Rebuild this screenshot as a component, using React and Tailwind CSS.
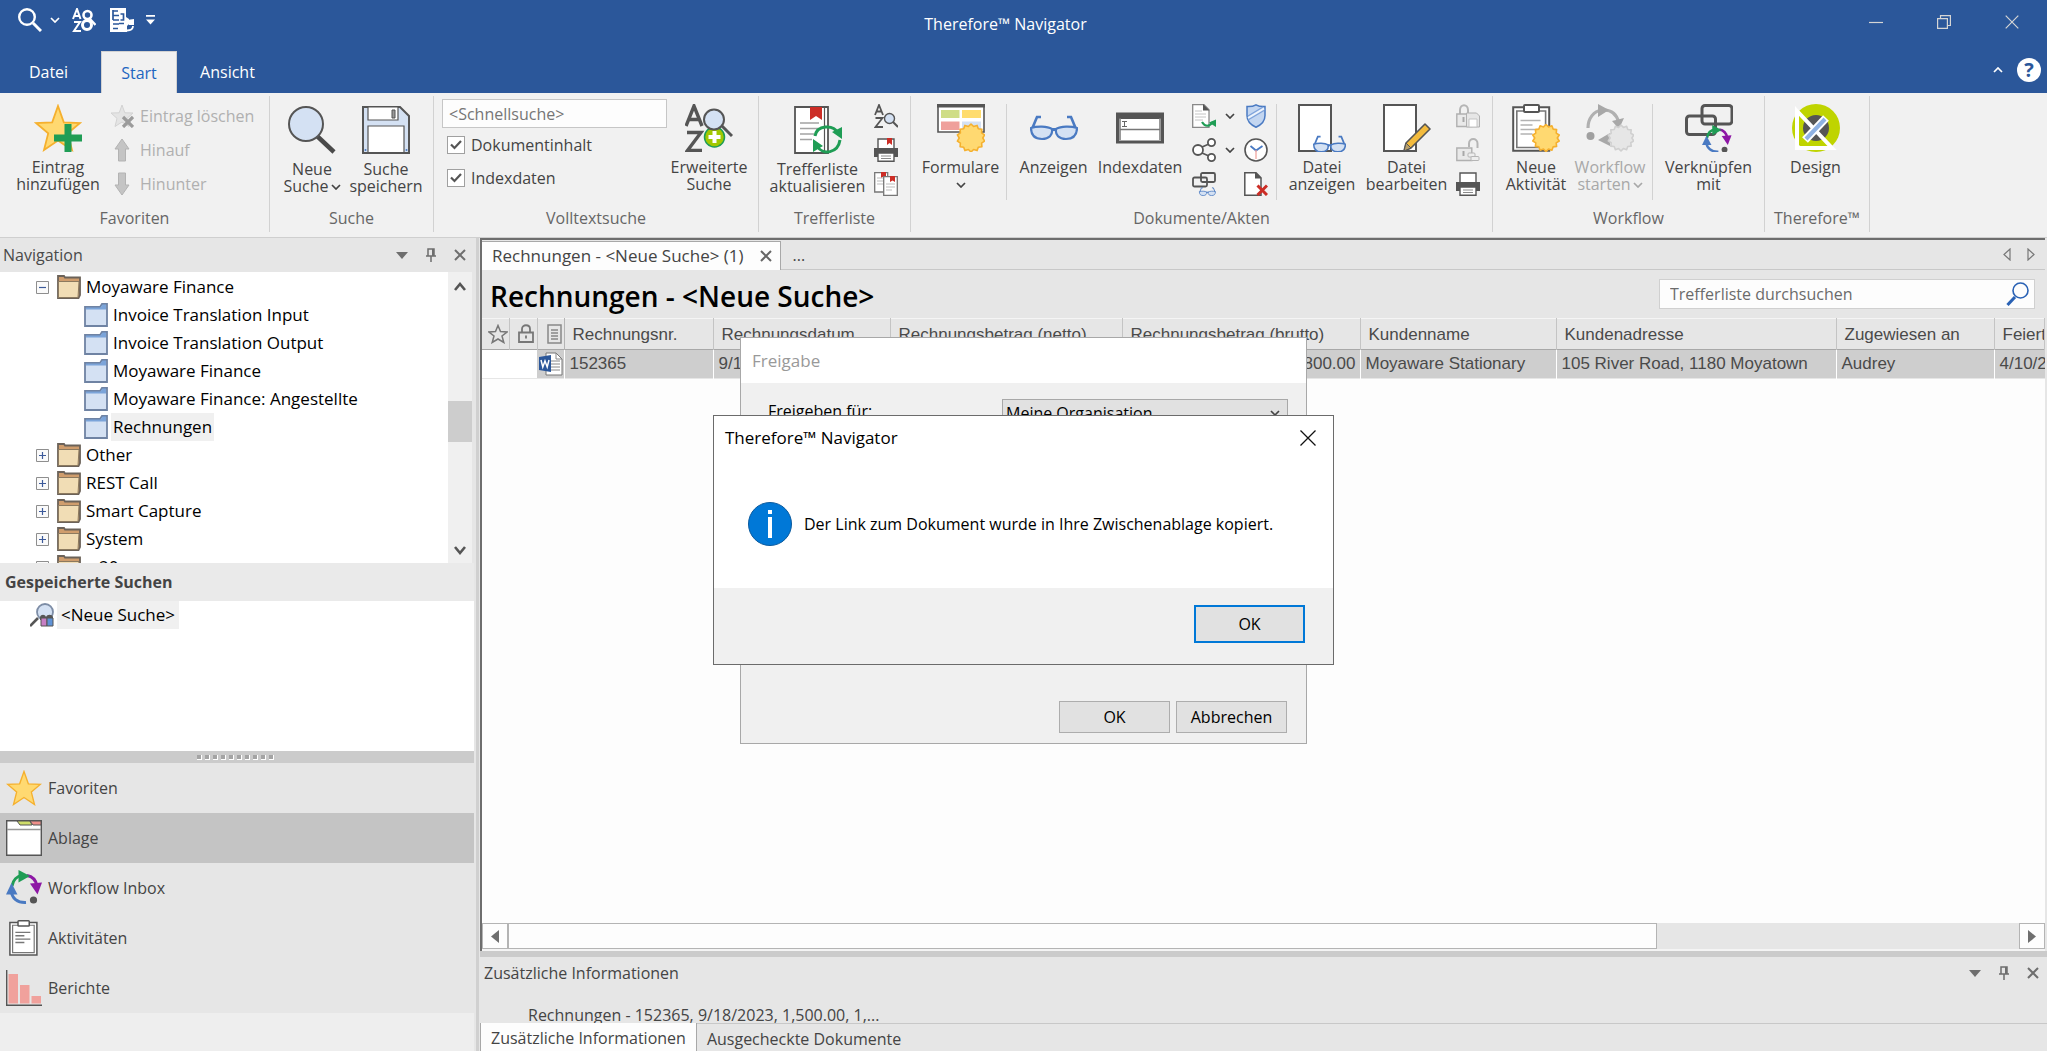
import React from "react";

const G = "#555555";
const GREEN = "#1f9d55";
const BLUE = "#4a7ac2";
const LIGHT = "#d4e1f3";
const YELLOW = "#ffd971";
const ORANGE = "#f5b02e";

const Svg = ({ s = 48, vb = s, children }) => (
  <svg width={s} height={s} viewBox={`0 0 ${vb} ${vb}`} fill="none" className="block shrink-0" aria-hidden="true">
    {children}
  </svg>
);

const STAR = "M24 2l5.8 16.4L46 19 33.8 29.4 38 46 24 36.6 10 46l4.2-16.6L2 19l16.2-.6z";

const burst = (cx, cy, r, n = 14) => {
  const pts = [];
  for (let i = 0; i < n * 2; i++) {
    const a = (Math.PI * i) / n - Math.PI / 2;
    const q = i % 2 ? r * 0.84 : r;
    pts.push(`${(cx + q * Math.cos(a)).toFixed(1)},${(cy + q * Math.sin(a)).toFixed(1)}`);
  }
  return pts.join(" ");
};

const Burst = ({ cx, cy, r, fill = YELLOW, stroke = ORANGE }) => (
  <polygon points={burst(cx, cy, r)} fill={fill} stroke={stroke} strokeWidth="1.6" strokeLinejoin="round" />
);

const StarPlus = () => (
  <Svg>
    <path d={STAR} fill={YELLOW} stroke={ORANGE} strokeWidth="1.8" />
    <path d="M34 20v28M20 34h28" stroke={GREEN} strokeWidth="7" />
  </Svg>
);
const StarX = () => (
  <Svg s={24}>
    <path d="M12 1l2.8 7.8L23 9l-6 5.4 2 8.1-7-4.5-7 4.500 2-8.100L1 9l8.200-.2z" fill="#e4e4e4" stroke="#d3d3d3" />
    <path d="M13 13l10 10M23 13L13 23" stroke="#9b9b9b" strokeWidth="3.200" />
  </Svg>
);
const ArrowUp = () => (
  <Svg s={24}>
    <path d="M12 1l7 10h-3.500v12h-7V11H5z" fill="#c4c4c4" stroke="#b3b3b3" />
  </Svg>
);
const ArrowDown = () => (
  <Svg s={24}>
    <path d="M12 23l7-10h-3.500V1h-7v12H5z" fill="#c4c4c4" stroke="#b3b3b3" />
  </Svg>
);
const Magnifier = () => (
  <Svg>
    <path d="M29 30l17 16" stroke="#4a4a4a" strokeWidth="4.500" />
    <circle cx="18" cy="18" r="17" fill={LIGHT} stroke={G} strokeWidth="2" />
  </Svg>
);
const Floppy = () => (
  <Svg>
    <path d="M1 1h37l9 9v37H1z" fill={LIGHT} stroke={G} strokeWidth="2" />
    <path d="M6 1h30v13H6z" fill="#fff" stroke={G} strokeWidth="1.200" />
    <path d="M30 4h3v8h-3z" fill="#999" stroke={G} />
    <path d="M6 20h36v27H6z" fill="#fff" stroke={G} strokeWidth="1.200" />
    <path d="M0 47h48" stroke={G} strokeWidth="2" />
    <circle cx="3.500" cy="44" r="1" fill={BLUE} />
    <circle cx="44.500" cy="44" r="1" fill={BLUE} />
  </Svg>
);
const SortSearch = () => (
  <Svg>
    <path d="M1 22L9 2l8 20M3.500 15.500h11M2 28.500h14L2.500 46.500H17" stroke={G} strokeWidth="3.400" />
    <circle cx="29.500" cy="33" r="10" fill="#a2c800" stroke={GREEN} strokeWidth="1.500" />
    <path d="M29.500 27v12M23.500 33h12" stroke="#fff" strokeWidth="4" />
    <path d="M37 22l10 10" stroke={G} strokeWidth="3" />
    <circle cx="29" cy="15.500" r="10" fill={LIGHT} stroke={G} strokeWidth="2" />
  </Svg>
);
const RefreshList = () => (
  <Svg>
    <path d="M1 1h33v46H1z" fill="#fff" stroke={G} strokeWidth="1.800" />
    <path d="M30.500 1v46" stroke={G} strokeWidth="1.200" />
    <path d="M16 1h12v13l-6-4-6 4z" fill="#cc2d26" />
    <path d="M6 17h19M6 22.500h19M6 28h14M6 33.500h12" stroke="#a3a3a3" strokeWidth="1.500" />
    <path d="M21 30c2-11 18-12 23-3M46 34c-2 13-17 16-23 6" stroke={GREEN} strokeWidth="3" />
    <path d="M48 21v12l-10-7zM19 46V33l10 7z" fill={GREEN} />
  </Svg>
);
const SortSmall = () => (
  <Svg s={24}>
    <path d="M1 11L5 1l4 10M2.500 7.500h5M1.500 14h7l-7 9h7.500" stroke={G} strokeWidth="1.800" />
    <path d="M19 18l5 5" stroke={G} strokeWidth="2" />
    <circle cx="15.500" cy="14.500" r="5" fill={LIGHT} stroke={G} strokeWidth="1.400" />
  </Svg>
);
const Printer = ({ mark }) => (
  <Svg s={24}>
    <path d="M4 1h16v12H4z" fill="#fff" stroke={G} strokeWidth="1.400" />
    {mark && <path d="M13 0h5v7l-2.500-2L13 7z" fill="#cc2d26" />}
    <path d="M0 10h24v9H0z" fill={G} />
    <path d="M4 15h16v8.300H4z" fill="#fff" stroke={G} strokeWidth="1.400" />
    <path d="M7 18h10M7 20.500h10" stroke="#8a8a8a" />
  </Svg>
);
const ListCopy = () => (
  <Svg s={24}>
    <path d="M.7.700h13V20H.7z" fill="#fff" stroke="#777" strokeWidth="1.300" />
    <path d="M7 0h5v6L9.500 4.500 7 6z" fill="#cc2d26" />
    <path d="M3 6h6M3 9h6M3 12h6" stroke="#bbb" />
    <path d="M9.700 4.700h13.600v18.600H9.700z" fill="#fff" stroke="#777" strokeWidth="1.300" />
    <path d="M16 4h5v6l-2.500-1.500L16 10z" fill="#cc2d26" />
    <path d="M12 12h9M12 15h9M12 18h6" stroke="#bbb" />
  </Svg>
);
const Forms = () => (
  <Svg>
    <path d="M1 1h46v27H1z" fill="#fff" stroke={G} strokeWidth="1.600" />
    <path d="M0 0h48v3.500H0z" fill={G} />
    <path d="M4 6h18.500v8H4z" fill="#cfdd86" />
    <path d="M25 6h19v8H25z" fill="#ffdc6e" />
    <path d="M4 17.500h18.500v8.500H4z" fill="#efa09b" />
    <path d="M25 17.500h19v8.500H25z" fill={LIGHT} />
    <Burst cx={34} cy={34} r={14} />
  </Svg>
);
const GlassesMini = ({ x, y, k }) => (
  <g transform={`translate(${x} ${y}) scale(${k})`}>
    <path d="M2 13L7 1h4M46 13L41 1h-4" stroke={BLUE} strokeWidth="2.600" />
    <path d="M1 12c6-2 16-2 21 1 1 6-3 10-10 10S1 20 1 12zM47 12c-6-2-16-2-21 1-1 6 3 10 10 10s11-3 11-11z" fill={LIGHT} stroke={BLUE} strokeWidth="2.200" />
    <path d="M21 13.500h6" stroke={BLUE} strokeWidth="3" />
  </g>
);
const Glasses = () => (
  <Svg>
    <GlassesMini x={0} y={12} k={1} />
  </Svg>
);
const IndexIcon = () => (
  <Svg>
    <path d="M1.500 10h45v28h-45z" fill="#fff" stroke={G} strokeWidth="3" />
    <path d="M0 9h48v6H0z" fill={G} />
    <path d="M4 25.500h40M4 14v22M44 14v22" stroke="#777" strokeWidth="1.500" />
    <path d="M6 17.500h5M6 22.500h5M8.500 17.500v5" stroke="#666" />
  </Svg>
);
const CheckInDoc = () => (
  <Svg s={24}>
    <path d="M.7.700H12l5 5V23.300H.7z" fill="#fff" stroke="#888" strokeWidth="1.300" />
    <path d="M11 0l6.500 6.500H11z" fill={G} />
    <path d="M3 7h7M3 10h11M3 13h11M3 16h8" stroke="#c4c4c4" />
    <path d="M10 18c3 5 7 5 11 0" stroke={GREEN} strokeWidth="2.200" />
    <path d="M24 15.500v7.500l-7-4.500z" fill={GREEN} />
  </Svg>
);
const ShareIcon = () => (
  <Svg s={24}>
    <path d="M10 9l7-3M10 15l7 3" stroke={G} strokeWidth="1.600" />
    <circle cx="6" cy="12" r="5" fill="#fff" stroke={G} strokeWidth="1.800" />
    <circle cx="19.500" cy="4.500" r="3.600" fill="#fff" stroke={G} strokeWidth="1.800" />
    <circle cx="19.500" cy="19.500" r="3.600" fill="#fff" stroke={G} strokeWidth="1.800" />
  </Svg>
);
const LinkView = () => (
  <Svg s={24}>
    <rect x="9" y="1" width="14" height="9" rx="1.500" stroke={G} strokeWidth="1.800" />
    <rect x="1" y="5.500" width="14" height="9" rx="1.500" stroke={G} strokeWidth="1.800" />
    <GlassesMini x={7} y={15.500} k={0.35} />
  </Svg>
);
const Shield = () => (
  <Svg s={24}>
    <path d="M12 .8c3 1.700 6 1.900 9 1.700v9c0 6-4 9.500-9 11.700C7 21 3 17.500 3 11.500v-9c3 .2 6 0 9-1.700z" fill="#c3d6f1" stroke={BLUE} strokeWidth="1.500" />
    <path d="M4 14L20 4.500" stroke="#eef4fc" strokeWidth="2" />
    <path d="M4 12L19 3M4 16L20 6.500" stroke="#7ea2da" strokeWidth="1.200" />
  </Svg>
);
const Clock = () => (
  <Svg s={24}>
    <circle cx="12" cy="12" r="11" fill="#fff" stroke={G} strokeWidth="1.600" />
    <path d="M6.500 8l5.500 4.500L18.500 8" stroke={BLUE} strokeWidth="1.800" />
    <path d="M12 12v9" stroke="#f3a6a0" strokeWidth="1.300" />
  </Svg>
);
const DocDelete = () => (
  <Svg s={24}>
    <path d="M.8.700H12l5 5V23.300H.8z" fill="#fff" stroke={G} strokeWidth="1.500" />
    <path d="M11 0l6.500 6.500H11z" fill={G} />
    <path d="M13.500 13.500l9.500 9.500M23 13.500L13.500 23" stroke="#cc2d26" strokeWidth="3" />
  </Svg>
);
const FileView = () => (
  <Svg>
    <path d="M1 1h32v46H1z" fill="#fff" stroke={G} strokeWidth="2" />
    <GlassesMini x={15} y={32} k={0.690} />
  </Svg>
);
const FileEdit = () => (
  <Svg>
    <path d="M1 1h32v46H1z" fill="#fff" stroke={G} strokeWidth="2" />
    <path d="M21 47l2-8 19-19 5 5-19 19z" fill="#f3bb3d" stroke={G} strokeWidth="1.600" strokeLinejoin="round" />
    <path d="M21 47l2-8 5 5z" fill="#b9a06a" stroke={G} />
  </Svg>
);
const LockSave = ({ open }) => (
  <Svg s={24}>
    <path d={open ? "M13 9V5.500c0-6 8.500-6 8.500 0V10" : "M4 10V6c0-6.500 8-6.500 8 0v4"} stroke="#b5b5b5" strokeWidth="2" />
    <path d="M.8 10h15v12.500H.8z" fill="#e9e9e9" stroke="#b0b0b0" strokeWidth="1.400" />
    <path d="M7.500 13v5" stroke="#a8a8a8" strokeWidth="2" />
    {open ? (
      <>
        <rect x="12" y="15" width="7" height="4" rx="1" fill="#eee" stroke="#b5b5b5" />
        <rect x="15" y="18.500" width="8" height="4" rx="1" fill="#eee" stroke="#b5b5b5" />
      </>
    ) : (
      <>
        <path d="M10.500 9h10l3 3v11h-13z" fill="#e6e6e6" stroke="#b0b0b0" />
        <path d="M13 15h8v8h-8z" fill="#fff" stroke="#c4c4c4" />
      </>
    )}
  </Svg>
);
const ClipBody = ({ ink = "#b2b2b2" }) => (
  <>
    <path d="M1.200 3.200h36v43.600h-36z" fill="#fff" stroke={G} strokeWidth="2" />
    <path d="M4.800 7h28.800v36.500H4.800z" fill="#fff" stroke="#777" strokeWidth="1.600" />
    <rect x="12" y="1" width="15" height="7" rx="1" fill="#fff" stroke={G} strokeWidth="2" />
    <path d="M8.500 16.500h20M8.500 21h12M8.500 25.500h20M8.500 30h12" stroke={ink} strokeWidth="1.700" />
  </>
);
const NewActivity = () => (
  <Svg>
    <ClipBody />
    <Burst cx={34} cy={34} r={13.500} />
  </Svg>
);
const WorkflowStart = () => (
  <Svg>
    <path d="M2 24C2 14 8 7 16 6M18 6c8 0 13 5 15 13" stroke="#b0b0b0" strokeWidth="3.200" />
    <path d="M12 0l11 6-11 7zM26 17l12-3-5 11zM12 36l12-7v13z" fill="#a8a8a8" />
    <circle cx="4.500" cy="32" r="4" fill="#a0a0a0" />
    <Burst cx={35} cy={34} r={13} fill="#e6e6e6" stroke="#d0d0d0" />
  </Svg>
);
const CycleArrows = ({ x = 0, y = 0, k = 1 }) => (
  <g transform={`translate(${x} ${y}) scale(${k})`}>
    <path d="M6 16C7 10 11 6 16 5.500" stroke={GREEN} strokeWidth="3" />
    <path d="M21 5.500c6 1 9 5 10 10.500" stroke="#8d17a5" strokeWidth="3" />
    <path d="M5.500 21c0 7 6 12 14.500 11.500" stroke={BLUE} strokeWidth="3" />
    <path d="M12.500 0L24 6l-11.500 6.500z" fill={GREEN} />
    <path d="M24 13.500l12-1-4.500 12z" fill="#8d17a5" />
    <path d="M0 24.500L5.500 13l6 11.500z" fill={BLUE} />
    <circle cx="27.500" cy="30" r="3.600" fill={G} />
  </g>
);
const LinkWith = () => (
  <Svg>
    <rect x="17" y="1.500" width="30" height="18.500" rx="3" stroke={G} strokeWidth="3" />
    <rect x="1.500" y="12" width="29" height="18.500" rx="3" stroke={G} strokeWidth="3" />
    <CycleArrows x={17} y={21} k={0.820} />
  </Svg>
);
const Design = () => (
  <Svg>
    <circle cx="24" cy="24" r="24" fill="#bfd400" />
    <circle cx="24" cy="24" r="13" fill={G} />
    <path d="M5 7v37h35z" stroke="#fff" strokeWidth="4" />
    <path d="M13 36l21-22" stroke="#fff" strokeWidth="8" />
    <path d="M14 35l19-20" stroke="#8fb2e3" strokeWidth="4" />
  </Svg>
);

const Chev = ({ c = "#444", up }) => (
  <svg width="10" height="6" viewBox="0 0 10 6" fill="none" className="shrink-0" aria-hidden="true">
    <path d={up ? "M1 5l4-4 4 4" : "M1 1l4 4 4-4"} stroke={c} strokeWidth="1.700" />
  </svg>
);

const Big = ({ icon, lines, w, disabled, chev, below }) => (
  <button disabled={disabled} className={`flex shrink-0 flex-col items-center gap-[7px] self-start ${w} ${disabled ? "text-[#a8a8a8]" : "text-[#444444]"}`}>
    {icon}
    <span className="flex flex-col items-center text-base leading-[17px] whitespace-nowrap">
      {lines.map((l, i) => (
        <span key={l} className="flex items-center gap-0.5">
          {l}
          {chev && i === lines.length - 1 && <Chev c={disabled ? "#a8a8a8" : "#444"} />}
        </span>
      ))}
      {below && <span className="pt-1.5"><Chev /></span>}
    </span>
  </button>
);

const Group = ({ label, w, low, children }) => (
  <section className={`flex h-[136px] shrink-0 flex-col border-r border-[#d2d2d2] ${w}`}>
    <div className={`flex min-h-0 flex-1 ${low ? "pt-2.5" : "pt-2"}`}>{children}</div>
    <h2 className="h-7 text-center text-base leading-7 text-[#666666]">{label}</h2>
  </section>
);

const SmallCol = ({ items, className = "" }) => (
  <div className={`flex shrink-0 flex-col gap-2.5 ${className}`}>
    {items.map(([name, icon]) => (
      <button key={name} aria-label={name} className="h-6 w-6">{icon}</button>
    ))}
  </div>
);

const Sep = ({ className = "" }) => <div className={`h-24 w-px shrink-0 bg-[#d2d2d2] ${className}`} />;

const Check = ({ label }) => (
  <label className="flex h-[33px] items-center gap-1.5 pl-[5px] text-base text-[#444444]">
    <span className="grid">
      <input type="checkbox" defaultChecked className="col-start-1 row-start-1 h-[18px] w-[18px] appearance-none border border-[#a0a0a0] bg-white" />
      <svg width="18" height="18" viewBox="0 0 18 18" fill="none" className="pointer-events-none col-start-1 row-start-1" aria-hidden="true">
        <path d="M4 8.500l3.500 3.500L14 5" stroke="#555" strokeWidth="2.200" />
      </svg>
    </span>
    {label}
  </label>
);

const Ribbon = () => (
  <div className="flex h-[145px] shrink-0 overflow-hidden border-b border-[#cfcfcf] bg-[#f1f1f1] pt-[3px]">
    <Group label="Favoriten" w="w-[270px]">
      <Big icon={<StarPlus />} lines={["Eintrag", "hinzufügen"]} w="ml-2 w-[100px]" />
      <div className="ml-0.5 flex flex-col gap-2.5">
        {[["Eintrag löschen", <StarX />], ["Hinauf", <ArrowUp />], ["Hinunter", <ArrowDown />]].map(([t, i]) => (
          <button key={t} disabled className="flex h-6 items-center gap-1.5 text-base whitespace-nowrap text-[#b0b0b0]">
            {i}
            {t}
          </button>
        ))}
      </div>
    </Group>
    <Group label="Suche" w="w-[164px]" low>
      <Big icon={<Magnifier />} lines={["Neue", "Suche"]} w="ml-1 w-[76px]" chev />
      <Big icon={<Floppy />} lines={["Suche", "speichern"]} w="w-[72px]" />
    </Group>
    <Group label="Volltextsuche" w="w-[325px]">
      <div className="-mt-[5px] ml-2 w-[225px] shrink-0">
        <input aria-label="Schnellsuche" placeholder="<Schnellsuche>" className="block h-[29px] w-full border border-[#c6c6c6] bg-[#fdfdfd] px-1.5 text-base text-[#444444] placeholder:text-[#767676]" />
        <Check label="Dokumentinhalt" />
        <Check label="Indexdaten" />
      </div>
      <Big icon={<SortSearch />} lines={["Erweiterte", "Suche"]} w="w-[84px]" />
    </Group>
    <Group label="Trefferliste" w="w-[152px]" low>
      <Big icon={<RefreshList />} lines={["Trefferliste", "aktualisieren"]} w="ml-1 w-[109px]" />
      <SmallCol className="-mt-0.5 ml-0.5" items={[["Sortieren", <SortSmall />], ["Liste drucken", <Printer mark />], ["Listen vergleichen", <ListCopy />]]} />
    </Group>
    <Group label="Dokumente/Akten" w="w-[582px]">
      <Big icon={<Forms />} lines={["Formulare"]} w="ml-1 w-[91px]" below />
      <Sep />
      <Big icon={<Glasses />} lines={["Anzeigen"]} w="w-[93px]" />
      <Big icon={<IndexIcon />} lines={["Indexdaten"]} w="w-[80px]" />
      <SmallCol className="ml-3" items={[["Einchecken", <CheckInDoc />], ["Freigeben", <ShareIcon />], ["Verknüpfungen anzeigen", <LinkView />]]} />
      <div className="flex w-7 shrink-0 flex-col items-center gap-2.5">
        <button aria-label="Einchecken Optionen" className="flex h-6 items-center"><Chev /></button>
        <button aria-label="Freigeben Optionen" className="flex h-6 items-center"><Chev /></button>
      </div>
      <SmallCol items={[["Sicherheit", <Shield />], ["Verlauf", <Clock />], ["Löschen", <DocDelete />]]} />
      <Sep className="ml-2" />
      <Big icon={<FileView />} lines={["Datei", "anzeigen"]} w="w-[90px]" />
      <Big icon={<FileEdit />} lines={["Datei", "bearbeiten"]} w="w-[79px]" />
      <SmallCol className="ml-2.5" items={[["Sperren", <LockSave />], ["Entsperren", <LockSave open />], ["Drucken", <Printer />]]} />
    </Group>
    <Group label="Workflow" w="w-[272px]">
      <Big icon={<NewActivity />} lines={["Neue", "Aktivität"]} w="ml-1 w-[78px]" />
      <Big icon={<WorkflowStart />} lines={["Workflow", "starten"]} w="w-[70px]" chev disabled />
      <Sep className="ml-[7px]" />
      <Big icon={<LinkWith />} lines={["Verknüpfen", "mit"]} w="w-[111px]" />
    </Group>
    <Group label="Therefore™" w="w-[105px]">
      <Big icon={<Design />} lines={["Design"]} w="w-[101px]" />
    </Group>
  </div>
);

const TitleBar = () => (
  <header className="shrink-0 bg-[#2b579a] text-white">
    <div className="grid h-[51px] grid-cols-[1fr_auto_1fr] items-start">
      <div className="flex items-center gap-2 pt-2 pl-[18px]">
        <button aria-label="Suche">
          <Svg s={24}>
            <path d="M15 15l8 8" stroke="#fff" strokeWidth="3" />
            <circle cx="9" cy="9" r="7.800" stroke="#fff" strokeWidth="2.400" />
          </Svg>
        </button>
        <button aria-label="Suchoptionen"><Chev c="#fff" /></button>
        <button aria-label="Erweiterte Suche" className="ml-1">
          <Svg s={24}>
            <path d="M1 11L5 1l3.500 10M2 8h6M2 14h6l-6 9h7" stroke="#fff" strokeWidth="2" />
            <circle cx="15.500" cy="7" r="4" stroke="#fff" strokeWidth="2.600" />
            <circle cx="15" cy="17" r="4.500" stroke="#fff" strokeWidth="3" />
            <path d="M18 11l5.500 6" stroke="#fff" strokeWidth="2.400" />
          </Svg>
        </button>
        <button aria-label="Trefferliste aktualisieren" className="ml-1.5">
          <Svg s={24}>
            <path d="M0 0h16v9l3 2v5l-2 2v6H0z" fill="#fff" />
            <path d="M3 3h5M3 7.500h6M3 12h6M3 16h6M3 20.500h5M3 2v10M10.500 6h3v6h-3M9 15.500h5" stroke="#2b579a" strokeWidth="1.700" />
            <path d="M17 22.500c4 0 6-2 6-4.500" stroke="#fff" strokeWidth="1.800" />
            <path d="M17 12l7-1v6h-5z" fill="#fff" />
          </Svg>
        </button>
        <button aria-label="Symbolleiste anpassen" className="ml-1">
          <svg width="9" height="10" viewBox="0 0 9 10" aria-hidden="true">
            <path d="M0 0h9v1.800H0zM0 4.500h9L4.500 9.500z" fill="#fff" />
          </svg>
        </button>
      </div>
      <h1 className="pt-3 pr-9 text-base leading-6">Therefore™ Navigator</h1>
      <div className="flex justify-end gap-[54px] pt-[15px] pr-7 text-[#d5d5d5]">
        <button aria-label="Minimieren"><Svg s={14}><path d="M0 7.500h14" stroke="currentColor" strokeWidth="1.200" /></Svg></button>
        <button aria-label="Wiederherstellen"><Svg s={14}><path d="M.6 3.600h9.800v9.800H.6zM3.500 3.500V.6h9.900v9.900h-3" stroke="currentColor" strokeWidth="1.200" /></Svg></button>
        <button aria-label="Schließen"><Svg s={14}><path d="M.7.700l12.600 12.600M13.300.7L.7 13.300" stroke="currentColor" strokeWidth="1.200" /></Svg></button>
      </div>
    </div>
    <nav className="flex h-[42px] items-stretch text-base">
      <button className="w-[101px] pr-1">Datei</button>
      <button className="w-[76px] border border-b-0 border-[#d2d2d2] bg-[#f1f1f1] text-[#1f66c0]">Start</button>
      <button className="w-[101px]">Ansicht</button>
      <div className="flex flex-1 items-center justify-end gap-3.5 pr-1.5 pb-1">
        <button aria-label="Menüband reduzieren"><Chev c="#fff" up /></button>
        <button aria-label="Hilfe" className="h-6 w-6 rounded-full bg-white text-xl leading-6 font-bold text-[#2b579a]">?</button>
      </div>
    </nav>
  </header>
);

const PaneButtons = () => (
  <div className="flex items-center gap-4 pr-2 text-[#6e6e6e]">
    <button aria-label="Menü"><svg width="12" height="7" viewBox="0 0 12 7" aria-hidden="true"><path d="M0 0h12L6 7z" fill="currentColor" /></svg></button>
    <button aria-label="Anheften">
      <Svg s={14}>
        <path d="M4 1h6v7H4zM2 8h10M7 8v6" stroke="currentColor" strokeWidth="1.500" />
        <path d="M8 1h2v7H8z" fill="currentColor" />
      </Svg>
    </button>
    <button aria-label="Schließen"><Svg s={12}><path d="M1 1l10 10M11 1L1 11" stroke="currentColor" strokeWidth="2" /></Svg></button>
  </div>
);

const Folder = () => (
  <Svg s={24}>
    <path d="M1 1h6l1 1.500h15V20l-1.500 3H1z" fill="#cf9d6d" stroke="#6b6259" strokeWidth="1.800" />
    <path d="M1.500 6.500h20.500l-1 16H1.500z" fill="#f1ddb5" stroke="#8c7a5f" />
  </Svg>
);
const CatIcon = () => (
  <Svg s={24}>
    <path d="M1 4h15l2-3h5v22H1z" fill={LIGHT} stroke="#6f83a3" strokeWidth="1.800" />
    <path d="M2 4.500h14.500l2-3H22v5H2z" fill="#7ba4d9" />
  </Svg>
);

const Expander = ({ open }) => (
  <button aria-label={open ? "Zuklappen" : "Aufklappen"} className="shrink-0">
    <Svg s={13}>
      <path d="M.5.500h12v12H.5z" fill="#fafafa" stroke="#8e8e8e" />
      <path d={open ? "M3 6.500h7" : "M3 6.500h7M6.500 3v7"} stroke="#3c5a9a" strokeWidth="1.200" />
    </Svg>
  </button>
);

const TREE = [
  ["Moyaware Finance", 0, true],
  ["Invoice Translation Input", 1],
  ["Invoice Translation Output", 1],
  ["Moyaware Finance", 1],
  ["Moyaware Finance: Angestellte", 1],
  ["Rechnungen", 1],
  ["Other", 0],
  ["REST Call", 0],
  ["Smart Capture", 0],
  ["System", 0],
  ["v 20", 0],
];

const NAV = [
  ["Favoriten", <Svg s={36} vb={48}><path d={STAR} fill={YELLOW} stroke={ORANGE} strokeWidth="1.800" /></Svg>],
  ["Ablage", (
    <Svg s={36}>
      <path d="M.7.700h34.600v34.600H.7z" fill="#fff" stroke={G} strokeWidth="1.400" />
      <path d="M11 1h13l2 4H14z" fill="#cfdd6a" stroke={G} />
      <path d="M24 1h11v4H27z" fill="#ef8f8a" stroke={G} />
      <path d="M1 9.500h34" stroke="#999" strokeWidth="1.400" />
    </Svg>
  )],
  ["Workflow Inbox", <Svg s={36}><CycleArrows /></Svg>],
  ["Aktivitäten", (
    <Svg s={36} vb={48}>
      <g transform="translate(4 0)">
        <ClipBody ink="#777" />
      </g>
    </Svg>
  )],
  ["Berichte", (
    <Svg s={36}>
      <path d="M.7 0v35.300H36" stroke={G} strokeWidth="1.400" />
      <path d="M2.500 4h9.500v29.500H2.500zM14 15h9.500v18.500H14zM25.500 26h9.500v7.500h-9.500z" fill="#f0a19c" />
    </Svg>
  )],
];

const Sidebar = () => (
  <aside className="flex w-[474px] shrink-0 flex-col bg-[#eeeeee]">
    <div className="flex h-[34px] shrink-0 items-center justify-between bg-[#e6e6e6] pl-[3px] text-base text-[#4a4a4a]">
      <h2>Navigation</h2>
      <PaneButtons />
    </div>
    <div className="flex h-[291px] shrink-0 overflow-hidden bg-white">
      <ul className="min-w-0 flex-1 pt-px">
        {TREE.map(([t, lvl, open], i) => (
          <li key={i} className={`flex h-7 items-center ${lvl ? "pl-[84px]" : "pl-9"}`}>
            {lvl === 0 && <span className="mr-2 flex"><Expander open={open} /></span>}
            {lvl ? <CatIcon /> : <Folder />}
            <span className={`ml-[3px] flex h-7 items-center px-0.5 text-[17px] text-black ${t === "Rechnungen" ? "bg-[#f0f0f0]" : ""}`}>{t}</span>
          </li>
        ))}
      </ul>
      <div className="flex w-6 flex-col items-center justify-between bg-[#f0f0f0] pt-2.5 pb-2">
        <svg width="12" height="9" viewBox="0 0 12 9" fill="none" aria-hidden="true"><path d="M1 8l5-6 5 6" stroke="#555" strokeWidth="2.600" /></svg>
        <div className="mt-1.5 h-[41px] w-6 bg-[#cdcdcd]" />
        <svg width="12" height="9" viewBox="0 0 12 9" fill="none" aria-hidden="true"><path d="M1 1l5 6 5-6" stroke="#555" strokeWidth="2.600" /></svg>
      </div>
      <div className="w-0.5 bg-[#e6e6e6]" />
    </div>
    <h2 className="h-[38px] shrink-0 bg-[#eaeaea] pl-[5px] text-base leading-[38px] font-bold text-[#444444]">Gespeicherte Suchen</h2>
    <div className="min-h-0 flex-1 bg-white">
      <div className="flex h-7 items-center gap-[3px] pl-[30px]">
        <Svg s={24}>
          <path d="M8 15l-8 8" stroke={G} strokeWidth="2.600" />
          <circle cx="15" cy="9" r="8" fill={LIGHT} stroke="#7d8da6" strokeWidth="1.800" />
          <path d="M10 14c1-3 5-3 6 0 1-3 6-3 7 0v3H10z" fill={G} />
          <path d="M11 15h6v8h-6z" fill="#c77fc4" stroke={G} />
          <path d="M17 15h6v8h-6z" fill="#5f92d6" stroke={G} />
        </Svg>
        <span className="flex h-7 items-center bg-[#f0f0f0] px-1 text-[17px] text-black">{"<Neue Suche>"}</span>
      </div>
    </div>
    <div className="flex h-3 shrink-0 items-center justify-center gap-[3px] bg-[#cbcbcb] pr-1">
      {Array.from({ length: 10 }, (_, i) => (
        <span key={i} className="h-[5px] w-[5px] border-r border-b border-white bg-[#a4a4a4]" />
      ))}
    </div>
    <nav className="shrink-0 bg-[#e6e6e6]">
      {NAV.map(([t, icon]) => (
        <button key={t} className={`flex h-[50px] w-full items-center gap-1.5 pl-1.5 text-base text-[#444444] ${t === "Ablage" ? "bg-[#c4c4c4]" : ""}`}>
          {icon}
          {t}
        </button>
      ))}
    </nav>
    <div className="h-[38px] shrink-0" />
  </aside>
);

const COLS = [
  ["Rechnungsnr.", "152365"],
  ["Rechnungsdatum", "9/18/2023"],
  ["Rechnungsbetrag (netto)", "1,500.00"],
  ["Rechnungsbetrag (brutto)", "1,800.00"],
  ["Kundenname", "Moyaware Stationary"],
  ["Kundenadresse", "105 River Road, 1180 Moyatown"],
  ["Zugewiesen an", "Audrey"],
  ["Feiert", "4/10/2"],
];

const WordDoc = () => (
  <Svg s={24}>
    <path d="M7 1h10l6 6v16H7z" fill="#fff" stroke="#777" />
    <path d="M17 1v6h6M11 9h10M11 12h10M11 15h10M11 18h10" stroke="#888" />
    <path d="M0 5l12-2v17L0 18z" fill="#2b579a" />
    <path d="M2 8l1.800 7L6 9l2.200 6L10 8" stroke="#fff" strokeWidth="1.500" />
  </Svg>
);

const Results = () => (
  <table className="w-full table-fixed border-collapse font-['Liberation_Sans',Arial,sans-serif] text-[17px] text-[#4a4a4a]">
    <colgroup>
      <col className="w-[27px]" />
      <col className="w-7" />
      <col className="w-[27px]" />
      <col className="w-[149px]" />
      <col className="w-[177px]" />
      <col className="w-[232px]" />
      <col className="w-[238px]" />
      <col className="w-[196px]" />
      <col className="w-[280px]" />
      <col className="w-[158px]" />
      <col />
    </colgroup>
    <thead className="bg-[#e6e6e6]">
      <tr className="h-[31px] border-t border-b border-t-[#f5f5f5] border-b-[#a8a8a8]">
        <th aria-label="Favorit" className="border-r border-[#c4c4c4] pl-1.5">
          <Svg s={20}><path d="M10 1.500l2.500 6 6.500.5-5 4 1.800 6.500L10 15l-5.800 3.500L6 12 1 8l6.500-.5z" stroke="#777" strokeWidth="1.500" /></Svg>
        </th>
        <th aria-label="Gesperrt" className="border-r border-[#c4c4c4] pl-1.5">
          <Svg s={20}><path d="M3 8.500h14v9.500H3zM6 8.500V5c0-5 8-5 8 0v3.500M10 11.500v3" stroke="#777" strokeWidth="1.800" /></Svg>
        </th>
        <th aria-label="Typ" className="border-r border-[#b4b4b4] pl-1.5">
          <Svg s={20}><path d="M4 1h13v18H4zM7 6h7M7 9h7M7 12h7M7 15h7" stroke="#888" strokeWidth="1.500" /></Svg>
        </th>
        {COLS.map(([h]) => (
          <th key={h} className="overflow-hidden border-r border-[#c4c4c4] pt-0.5 pl-2 text-left font-normal whitespace-nowrap">{h}</th>
        ))}
      </tr>
    </thead>
    <tbody>
      <tr className="h-[29px] border-b border-[#e6e6e6]">
        <td className="bg-white" />
        <td className="bg-white" />
        <td className="bg-[#cecece] pl-0.5"><WordDoc /></td>
        {COLS.map(([h, v]) => (
          <td key={h} className={`overflow-hidden border-l border-white bg-[#cecece] whitespace-nowrap ${v.endsWith(".00") ? "pr-1 text-right" : "pl-[5px]"}`}>{v}</td>
        ))}
      </tr>
    </tbody>
  </table>
);

const Main = () => (
  <main className="flex min-w-0 flex-1 flex-col">
    <section className="mr-0.5 flex min-h-0 flex-1 flex-col border-t-2 border-l-2 border-[#6e6e6e] bg-[#fdfdfd]">
      <div className="flex h-[30px] shrink-0 items-end border-b border-[#c8c8c8] bg-[#e6e6e6] pt-0.5 text-base text-[#444444]">
        <div className="-mb-px flex h-[29px] items-center gap-4 border-t border-r border-[#a8a8a8] bg-[#fdfdfd] pr-2 pl-2.5">
          <span className="text-[17px] whitespace-nowrap">{"Rechnungen - <Neue Suche> (1)"}</span>
          <button aria-label="Tab schließen"><Svg s={12}><path d="M1 1l10 10M11 1L1 11" stroke="#666" strokeWidth="2" /></Svg></button>
        </div>
        <button className="h-[29px] px-3">...</button>
        <div className="flex h-[29px] flex-1 items-center justify-end gap-4 pr-2.5">
          <button aria-label="Zurück"><svg width="8" height="13" viewBox="0 0 8 13" fill="none" aria-hidden="true"><path d="M7 1v11L1 6.500z" stroke="#777" strokeWidth="1.200" /></svg></button>
          <button aria-label="Weiter"><svg width="8" height="13" viewBox="0 0 8 13" fill="none" aria-hidden="true"><path d="M1 1v11l6-5.500z" stroke="#777" strokeWidth="1.200" /></svg></button>
        </div>
      </div>
      <div className="flex h-12 shrink-0 items-center justify-between bg-[#e6e6e6] pr-2.5 pl-2">
        <h2 className="pt-1 text-[28px] leading-10 font-semibold whitespace-nowrap text-black">{"Rechnungen - <Neue Suche>"}</h2>
        <div className="flex h-[30px] w-[376px] items-center border border-[#d0d0d0] bg-[#fdfdfd] pr-1">
          <input aria-label="Trefferliste durchsuchen" placeholder="Trefferliste durchsuchen" className="min-w-0 flex-1 bg-transparent pl-2.5 text-base placeholder:text-[#6b6b6b]" />
          <button aria-label="Suchen">
            <Svg s={24}><path d="M9 15l-7.500 8" stroke="#2a62b5" strokeWidth="3" /><circle cx="14.500" cy="8.500" r="7.500" stroke="#2a62b5" strokeWidth="1.600" /></Svg>
          </button>
        </div>
      </div>
      <div className="min-h-0 flex-1 overflow-hidden">
        <Results />
      </div>
      <div className="flex h-[26px] shrink-0 bg-[#e6e6e6]">
        <button aria-label="Nach links" className="flex w-[26px] items-center justify-center border border-[#b4b4b4] bg-[#fdfdfd]"><svg width="8" height="13" viewBox="0 0 8 13" aria-hidden="true"><path d="M8 0v13L0 6.500z" fill="#6e6e6e" /></svg></button>
        <div className="w-[1149px] border border-[#b4b4b4] bg-[#fdfdfd]" />
        <div className="flex-1" />
        <button aria-label="Nach rechts" className="flex w-[26px] items-center justify-center border border-[#b4b4b4] bg-[#fdfdfd]"><svg width="8" height="13" viewBox="0 0 8 13" aria-hidden="true"><path d="M0 0v13l8-6.500z" fill="#6e6e6e" /></svg></button>
      </div>
      <div className="h-0.5 shrink-0 bg-[#f4f4f4]" />
    </section>
    <div className="h-1.5 shrink-0 bg-[#cbcbcb]" />
    <section className="flex h-[94px] shrink-0 flex-col bg-[#e6e6e6] text-base text-[#444444]">
      <div className="flex h-8 shrink-0 items-center justify-between pl-1">
        <h2>Zusätzliche Informationen</h2>
        <PaneButtons />
      </div>
      <div className="min-h-0 flex-1 overflow-hidden pt-3.5 pl-12">{"Rechnungen - 152365, 9/18/2023, 1,500.00, 1,..."}</div>
      <div className="flex h-7 shrink-0 items-stretch">
        <button className="border-x border-[#a8a8a8] bg-[#fdfdfd] px-2.5 pt-0.5 whitespace-nowrap">Zusätzliche Informationen</button>
        <button className="flex-1 border-t border-[#c8c8c8] pt-0.5 pl-2.5 text-left">Ausgecheckte Dokumente</button>
      </div>
    </section>
  </main>
);

const ShareDialog = () => (
  <div role="dialog" aria-label="Freigabe" className="absolute top-[337px] left-[740px] flex h-[407px] w-[567px] flex-col border border-[#a8a8a8] bg-[#f0f0f0] text-base text-black">
    <h2 className="h-[45px] shrink-0 bg-white pl-[11px] text-[17px] leading-[45px] text-[#999999]">Freigabe</h2>
    <div className="flex items-start justify-between pt-4 pr-[18px] pl-[27px]">
      <label htmlFor="share-for">Freigeben für:</label>
      <div className="grid w-[286px]">
        <select id="share-for" className="col-start-1 row-start-1 h-7 appearance-none border border-[#a8a8a8] bg-[#e1e1e1] px-[3px]">
          <option>Meine Organisation</option>
        </select>
        <span className="pointer-events-none col-start-1 row-start-1 self-center justify-self-end pr-2"><Chev /></span>
      </div>
    </div>
    <div className="mt-auto flex justify-end gap-1.5 pr-[19px] pb-2.5">
      <button className="h-8 w-[111px] border border-[#adadad] bg-[#e1e1e1]">OK</button>
      <button className="h-8 w-[111px] border border-[#adadad] bg-[#e1e1e1]">Abbrechen</button>
    </div>
  </div>
);

const MessageDialog = () => (
  <div role="alertdialog" aria-label="Therefore™ Navigator" className="absolute top-[415px] left-[713px] flex h-[250px] w-[621px] flex-col border border-[#6b6b6b] bg-white text-black">
    <div className="flex h-11 items-center justify-between pr-[17px] pl-[11px]">
      <h2 className="text-[17px]">Therefore™ Navigator</h2>
      <button aria-label="Schließen"><Svg s={16}><path d="M.5.500l15 15M15.500.5l-15 15" stroke="#111" strokeWidth="1.300" /></Svg></button>
    </div>
    <div className="flex flex-1 items-center gap-3 pl-[34px]">
      <Svg s={44}>
        <circle cx="22" cy="22" r="21.500" fill="#0078d7" stroke="#0a5a9e" />
        <path d="M20 8h4v4h-4zM20 15h4v21h-4z" fill="#fff" />
      </Svg>
      <p className="text-base whitespace-nowrap">Der Link zum Dokument wurde in Ihre Zwischenablage kopiert.</p>
    </div>
    <div className="flex h-[76px] justify-end bg-[#f0f0f0] pt-[17px] pr-7">
      <button className="h-[38px] w-[111px] border-2 border-[#0078d7] bg-[#e1e1e1] text-base">OK</button>
    </div>
  </div>
);

export default function App() {
  return (
    <div className="relative flex h-screen flex-col overflow-hidden bg-[#e6e6e6] font-['Open_Sans','Segoe_UI',sans-serif]">
      <TitleBar />
      <Ribbon />
      <div className="flex min-h-0 flex-1">
        <Sidebar />
        <div className="w-0.5 shrink-0" />
        <div className="mr-px w-[3px] shrink-0 bg-[#d0d0d0]" />
        <Main />
      </div>
      <ShareDialog />
      <MessageDialog />
    </div>
  );
}
